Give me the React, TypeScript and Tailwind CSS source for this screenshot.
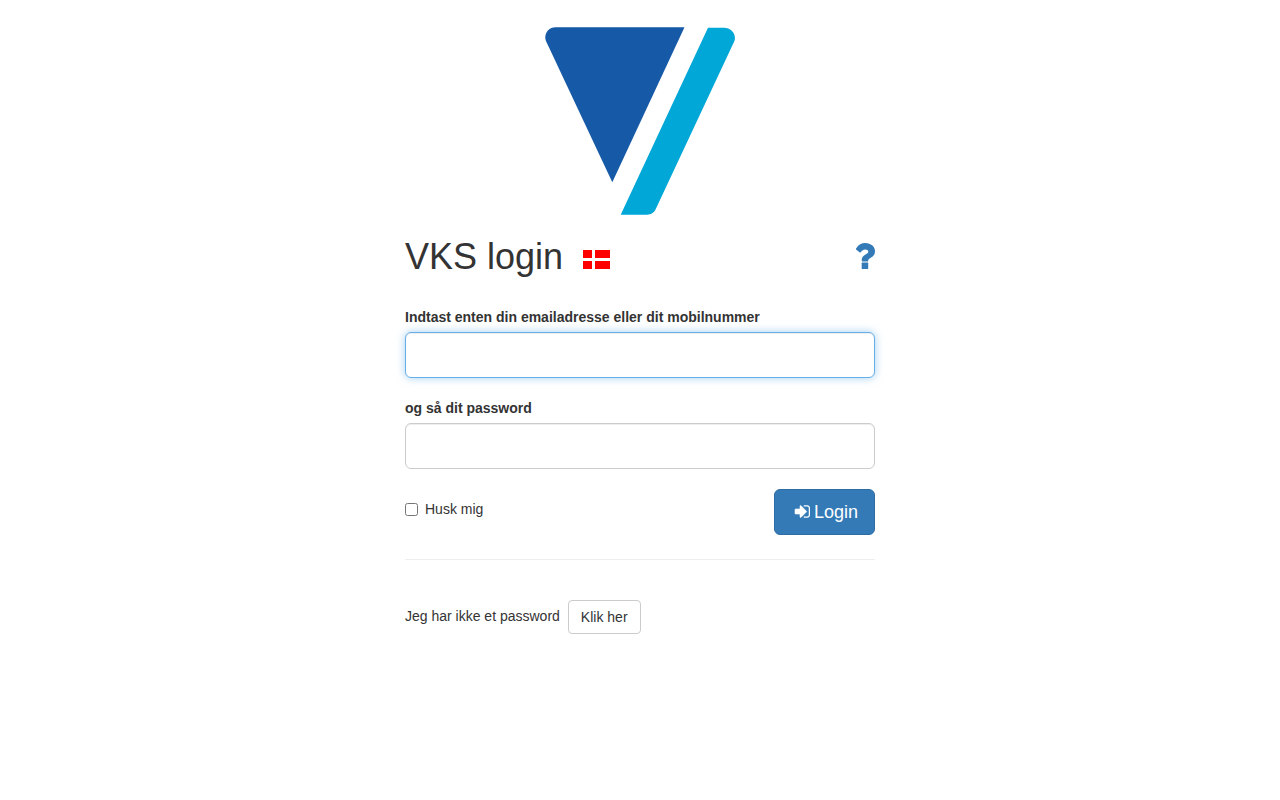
import React from 'react';

const inputClass =
  'block w-full h-[46px] px-4 py-2 text-lg text-[#555] bg-white border border-[#ccc] rounded-md outline-none shadow-[inset_0_1px_1px_rgba(0,0,0,0.075)] focus:border-[#66afe9] focus:shadow-[inset_0_1px_1px_rgba(0,0,0,0.075),0_0_8px_rgba(102,175,233,0.6)]';

function Logo() {
  return (
    <svg viewBox="0 0 190 188" className="w-[190px] h-[188px]" role="img" aria-label="VKS">
      <path
        fill="#165aa7"
        d="M10.500 0.200H139.500L67.300 155.200L1.200 14.500C-1.800 7.500 3 0.200 10.500 0.200Z"
      />
      <path
        fill="#00a7d7"
        d="M163 0.800H179C186.500 0.800 192 8 189.200 14.500L111 181.500C109.200 185.500 106.500 187.700 102 187.700H75.700Z"
      />
    </svg>
  );
}

function DanishFlag() {
  return (
    <svg viewBox="0 0 27 19" className="w-[27px] h-[19px]" fill="#f00" shapeRendering="crispEdges" aria-hidden="true">
      <rect width="9" height="8" />
      <rect x="12" width="15" height="8" />
      <rect y="11" width="9" height="8" />
      <rect x="12" y="11" width="15" height="8" />
    </svg>
  );
}

function QuestionIcon() {
  return (
    <svg viewBox="0 0 21 26" className="w-[21px] h-[26px]" fill="currentColor" aria-hidden="true">
      <path d="M2.200 5.300C4.300 1.800 7.500 0 11.500 0C16.500 0 21 3.600 21 8.200C21 12 18.600 13.700 16.300 15C14.900 15.800 14.200 16.900 14.200 17.700C14.200 18.300 13.900 18.600 13.300 18.600H8.500C8 18.600 7.700 18.200 7.700 17.600V16.900C7.700 14.300 9.700 12.200 12 11.200C13.600 10.500 14.300 9.800 14.300 8.600C14.300 7.300 13 6.500 11.300 6.500C9.300 6.500 8.200 7.400 6.700 9.200C6.400 9.600 5.900 9.600 5.500 9.300L2.300 6.700C1.900 6.300 1.900 5.800 2.200 5.300Z" />
      <rect x="7.700" y="19.600" width="6.500" height="6.400" rx="0.600" />
    </svg>
  );
}

function SignInIcon() {
  return (
    <svg viewBox="0 256 1536 1280" className="w-[15px] h-[13px] overflow-visible" fill="currentColor" aria-hidden="true">
      <path
        stroke="currentColor"
        strokeWidth="60"
        d="M1184 896q0 26-19 45l-544 544q-19 19-45 19t-45-19-19-45v-288h-448q-26 0-45-19t-19-45v-384q0-26 19-45t45-19h448v-288q0-26 19-45t45-19 45 19l544 544q19 19 19 45z"
      />
      <path d="M1536 544v704q0 119-84.500 203.500t-203.500 84.500h-320q-13 0-22.500-9.500t-9.500-22.500q0-4-1-20t-.5-26.500 3-23.500 10-19.500 20.500-6.500h320q66 0 113-47t47-113v-704q0-66-47-113t-113-47h-312l-11.500-1-11.500-3-8-5.500-7-9-2-13.500q0-4-1-20t-.5-26.500 3-23.500 10-19.500 20.500-6.500h320q119 0 203.500 84.500t84.500 203.500z" />
    </svg>
  );
}

export default function App() {
  return (
    <main className="mx-auto w-full max-w-[470px] pt-[27px] font-['Liberation_Sans',Arial,sans-serif] text-sm leading-5 text-[#333]">
      <div className="flex justify-center">
        <Logo />
      </div>

      <div className="mt-[22px] flex items-center justify-between">
        <div className="flex items-center gap-5">
          <h1 className="text-4xl leading-10 font-normal">VKS login</h1>
          <button type="button" aria-label="Dansk" className="pt-1">
            <DanishFlag />
          </button>
        </div>
        <a href="#help" aria-label="Hjælp" className="pb-0.5 text-[#337ab7]">
          <QuestionIcon />
        </a>
      </div>

      <form className="mt-[30px]" onSubmit={(e) => e.preventDefault()}>
        <div className="mb-5">
          <label htmlFor="username" className="block mb-[5px] font-bold">
            Indtast enten din emailadresse eller dit mobilnummer
          </label>
          <input id="username" type="text" autoFocus className={inputClass} />
        </div>

        <div className="mb-5">
          <label htmlFor="password" className="block mb-[5px] font-bold">
            og så dit password
          </label>
          <input id="password" type="password" className={inputClass} />
        </div>

        <div className="flex items-start justify-between">
          <label className="mt-[10px] flex items-center">
            <input type="checkbox" className="mr-[7px] size-[13px]" />
            Husk mig
          </label>
          <button
            type="submit"
            className="flex h-[46px] items-center gap-1 rounded-md border border-[#2e6da4] bg-[#337ab7] pr-4 pl-5 text-lg text-white"
          >
            <span className="pb-0.5">
              <SignInIcon />
            </span>
            Login
          </button>
        </div>
      </form>

      <hr className="mt-6 mb-10 border-[#eee]" />

      <div className="flex items-center gap-2">
        <span className="pb-0.5">Jeg har ikke et password</span>
        <button
          type="button"
          className="h-[34px] rounded border border-[#ccc] bg-white px-3"
        >
          Klik her
        </button>
      </div>
    </main>
  );
}
